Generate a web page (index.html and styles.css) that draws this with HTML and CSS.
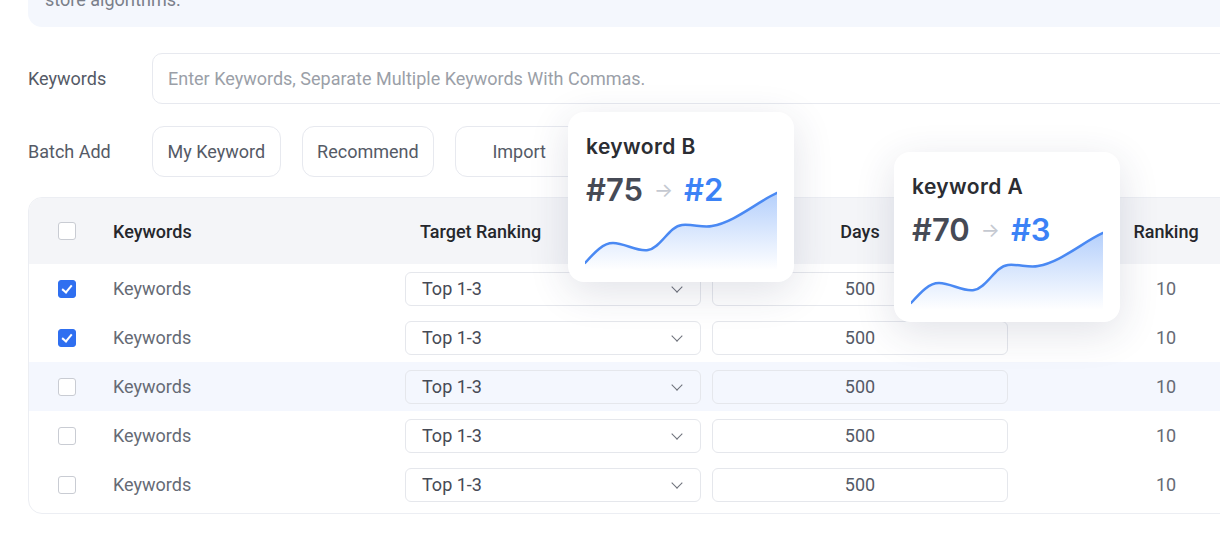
FILE: index.html
```html
<!DOCTYPE html>
<html lang="en">
<head>
  <meta charset="UTF-8" />
  <meta name="viewport" content="width=device-width, initial-scale=1.0"/>
  <title>Keyword Ranking Task</title>
  <link rel="stylesheet" href="styles.css">
</head>
<body>
  <div class="page">

    <div class="notice">store algorithms.</div>

    <div class="form-row">
      <label class="form-label" for="kwInput">Keywords</label>
      <input id="kwInput" class="kw-input" type="text" placeholder="Enter Keywords, Separate Multiple Keywords With Commas."/>
    </div>

    <div class="form-row">
      <span class="form-label">Batch Add</span>
      <div class="batch-btns">
        <button class="batch-btn">My Keyword</button>
        <button class="batch-btn">Recommend</button>
        <button class="batch-btn import">Import</button>
      </div>
    </div>

    <div class="kw-table">
      <div class="kw-row kw-head">
        <div class="cell-check"><span class="checkbox"></span></div>
        <div>Keywords</div>
        <div class="head-target">Target Ranking</div>
        <div class="head-days">Days</div>
        <div class="head-rank">Ranking</div>
      </div>

      <div class="kw-row">
        <div class="cell-check"><span class="checkbox checked"></span></div>
        <div class="kw-name">Keywords</div>
        <div><div class="select">Top 1-3<span class="chevron"></span></div></div>
        <div><div class="days-input">500</div></div>
        <div class="rank">10</div>
      </div>
      <div class="kw-row">
        <div class="cell-check"><span class="checkbox checked"></span></div>
        <div class="kw-name">Keywords</div>
        <div><div class="select">Top 1-3<span class="chevron"></span></div></div>
        <div><div class="days-input">500</div></div>
        <div class="rank">10</div>
      </div>
      <div class="kw-row hover">
        <div class="cell-check"><span class="checkbox"></span></div>
        <div class="kw-name">Keywords</div>
        <div><div class="select">Top 1-3<span class="chevron"></span></div></div>
        <div><div class="days-input">500</div></div>
        <div class="rank">10</div>
      </div>
      <div class="kw-row">
        <div class="cell-check"><span class="checkbox"></span></div>
        <div class="kw-name">Keywords</div>
        <div><div class="select">Top 1-3<span class="chevron"></span></div></div>
        <div><div class="days-input">500</div></div>
        <div class="rank">10</div>
      </div>
      <div class="kw-row">
        <div class="cell-check"><span class="checkbox"></span></div>
        <div class="kw-name">Keywords</div>
        <div><div class="select">Top 1-3<span class="chevron"></span></div></div>
        <div><div class="days-input">500</div></div>
        <div class="rank">10</div>
      </div>
    </div>

    <!-- floating ranking cards -->
    <div class="rank-card card-b">
      <div class="card-title">keyword B</div>
      <div class="card-nums"><span class="from">#75</span><span class="arrow">→</span><span class="to">#2</span></div>
      <svg class="trend" viewBox="0 0 192 80" width="192" height="80">
        <defs>
          <linearGradient id="fillB" x1="0" y1="0" x2="0" y2="1">
            <stop offset="0" stop-color="#3b82f6" stop-opacity="0.38"/>
            <stop offset="1" stop-color="#3b82f6" stop-opacity="0"/>
          </linearGradient>
        </defs>
        <path d="M0 73 C10 62 18 53 28 53 C40 53 52 62 63 60 C76 58 84 36 97 35 C108 34 118 38 127 36 C150 32 172 12 192 3 L192 80 L0 80 Z" fill="url(#fillB)"/>
        <path d="M0 73 C10 62 18 53 28 53 C40 53 52 62 63 60 C76 58 84 36 97 35 C108 34 118 38 127 36 C150 32 172 12 192 3" fill="none" stroke="#4a89f3" stroke-width="2.5" stroke-linecap="round"/>
      </svg>
    </div>

    <div class="rank-card card-a">
      <div class="card-title">keyword A</div>
      <div class="card-nums"><span class="from">#70</span><span class="arrow">→</span><span class="to">#3</span></div>
      <svg class="trend" viewBox="0 0 192 80" width="192" height="80">
        <defs>
          <linearGradient id="fillA" x1="0" y1="0" x2="0" y2="1">
            <stop offset="0" stop-color="#3b82f6" stop-opacity="0.38"/>
            <stop offset="1" stop-color="#3b82f6" stop-opacity="0"/>
          </linearGradient>
        </defs>
        <path d="M0 73 C10 62 18 53 28 53 C40 53 52 62 63 60 C76 58 84 36 97 35 C108 34 118 38 127 36 C150 32 172 12 192 3 L192 80 L0 80 Z" fill="url(#fillA)"/>
        <path d="M0 73 C10 62 18 53 28 53 C40 53 52 62 63 60 C76 58 84 36 97 35 C108 34 118 38 127 36 C150 32 172 12 192 3" fill="none" stroke="#4a89f3" stroke-width="2.5" stroke-linecap="round"/>
      </svg>
    </div>

  </div>
</body>
</html>
```

FILE: styles.css
```css
body {
  margin: 0;
  font-family: Roboto, 'Liberation Sans', Arial, sans-serif;
  background-color: #fff;
  color: #555a66;
  overflow: hidden;
}

.page {
  position: relative;
  display: flow-root;
  width: 1310px;
  padding-left: 28px;
}

.notice {
  margin-top: -19px;
  padding: 8px 17px 16px;
  line-height: 22px;
  font-size: 18px;
  color: #7a7f8a;
  background-color: #f4f7fd;
  border-radius: 0 0 0 14px;
}

.form-row {
  display: flex;
  align-items: center;
  margin-top: 26px;
}

.form-row + .form-row {
  margin-top: 22px;
}

.form-label {
  width: 124px;
  flex-shrink: 0;
  font-size: 18px;
  color: #555a66;
}

.kw-input {
  flex: 1;
  height: 51px;
  box-sizing: border-box;
  padding: 0 15px;
  font-family: inherit;
  font-size: 18px;
  border: 1px solid #e7e9ef;
  border-radius: 10px;
  outline: none;
}

.kw-input::placeholder {
  color: #9b9fa8;
}

.batch-btns {
  display: flex;
  gap: 21px;
}

.batch-btn {
  height: 51px;
  padding: 0 14.5px;
  font-family: inherit;
  font-size: 18px;
  color: #555a66;
  background: #fff;
  border: 1px solid #e7e9ef;
  border-radius: 12px;
}

.batch-btn.import {
  min-width: 128px;
}

/* keyword table */
.kw-table {
  margin-top: 20px;
  padding-bottom: 4px;
  border: 1px solid #eceef3;
  border-radius: 14px;
  overflow: hidden;
}

.kw-row {
  display: grid;
  grid-template-columns: 84px 292px 307px 308px 1fr;
  align-items: center;
  height: 49px;
  font-size: 18px;
  color: #666b75;
}

.kw-row.hover {
  background-color: #f4f7fe;
}

.kw-head {
  height: 66px;
  background-color: #f4f5f8;
  color: #25272c;
  font-weight: 500;
}

.head-target {
  padding-left: 15px;
}

.head-days {
  width: 296px;
  text-align: center;
}

.head-rank,
.rank {
  width: 292px;
  text-align: center;
}

.cell-check {
  padding-left: 29px;
  display: flex;
}

.checkbox {
  width: 18px;
  height: 18px;
  box-sizing: border-box;
  border: 1.5px solid #c9ccd3;
  border-radius: 3px;
  background: #fff;
  position: relative;
}

.checkbox.checked {
  border-color: #2f6ff0;
  background-color: #2f6ff0;
}

.checkbox.checked::after {
  content: "";
  position: absolute;
  left: 5px;
  top: 2px;
  width: 4px;
  height: 8px;
  border: solid #fff;
  border-width: 0 2px 2px 0;
  transform: rotate(40deg);
}

.select,
.days-input {
  width: 296px;
  height: 34px;
  box-sizing: border-box;
  border: 1px solid #e5e7ec;
  border-radius: 6px;
  display: flex;
  align-items: center;
  color: #464a55;
}

.select {
  justify-content: space-between;
  padding: 0 19px 0 16px;
}

.chevron {
  width: 7px;
  height: 7px;
  border: solid #6d717a;
  border-width: 0 1.5px 1.5px 0;
  transform: rotate(45deg);
  margin-top: -4px;
}

.days-input {
  justify-content: center;
  color: #555a66;
}

/* floating ranking cards */
.rank-card {
  position: absolute;
  width: 226px;
  height: 170px;
  box-sizing: border-box;
  padding: 23px 16px 0 18px;
  background: #fff;
  border-radius: 16px;
  box-shadow: 0 10px 40px rgba(40, 50, 90, 0.14);
  font-family: Inter, 'Noto Sans', sans-serif;
}

.card-b {
  left: 568px;
  top: 112px;
}

.card-a {
  left: 894px;
  top: 152px;
}

.card-title {
  font-size: 21px;
  letter-spacing: 0.4px;
  line-height: 24px;
  font-weight: 600;
  color: #2b2d33;
}

.card-nums {
  margin-top: 13px;
  line-height: 36px;
  font-size: 31px;
  font-weight: 600;
  color: #464a55;
  display: flex;
  align-items: center;
}

.arrow {
  font-size: 20px;
  font-weight: 400;
  color: #c5c9d1;
  margin: 0 11px;
}

.to {
  color: #3b82f6;
}

.trend {
  display: block;
  margin: -18px 0 0 -1px;
}
```
